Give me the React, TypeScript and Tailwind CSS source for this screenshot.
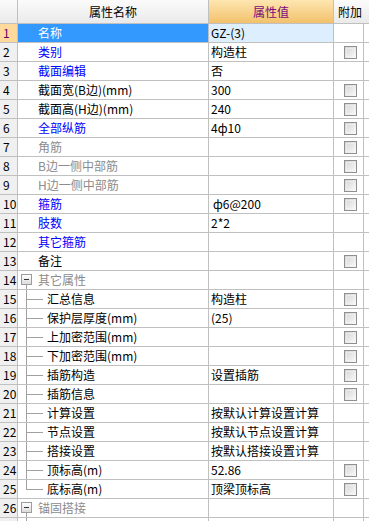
import React from 'react'

type Tone = 'blue' | 'gray' | 'black'

type Row = {
  name: string
  value?: string
  tone?: Tone
  check?: boolean
  group?: boolean
  child?: 'mid' | 'last'
  valuePad?: boolean
}

const rows: Row[] = [
  { name: '名称', value: 'GZ-(3)' },
  { name: '类别', value: '构造柱', tone: 'blue', check: true },
  { name: '截面编辑', value: '否', tone: 'blue' },
  { name: '截面宽(B边)(mm)', value: '300', check: true },
  { name: '截面高(H边)(mm)', value: '240', check: true },
  { name: '全部纵筋', value: '4ф10', tone: 'blue', check: true },
  { name: '角筋', tone: 'gray', check: true },
  { name: 'B边一侧中部筋', tone: 'gray', check: true },
  { name: 'H边一侧中部筋', tone: 'gray', check: true },
  { name: '箍筋', value: 'ф6@200', tone: 'blue', check: true, valuePad: true },
  { name: '肢数', value: '2*2', tone: 'blue' },
  { name: '其它箍筋', tone: 'blue' },
  { name: '备注', check: true },
  { name: '其它属性', tone: 'gray', group: true },
  { name: '汇总信息', value: '构造柱', check: true, child: 'mid' },
  { name: '保护层厚度(mm)', value: '(25)', check: true, child: 'mid' },
  { name: '上加密范围(mm)', check: true, child: 'mid' },
  { name: '下加密范围(mm)', check: true, child: 'mid' },
  { name: '插筋构造', value: '设置插筋', check: true, child: 'mid' },
  { name: '插筋信息', check: true, child: 'mid' },
  { name: '计算设置', value: '按默认计算设置计算', child: 'mid' },
  { name: '节点设置', value: '按默认节点设置计算', child: 'mid' },
  { name: '搭接设置', value: '按默认搭接设置计算', child: 'mid' },
  { name: '顶标高(m)', value: '52.86', check: true, child: 'mid' },
  { name: '底标高(m)', value: '顶梁顶标高', check: true, child: 'last' },
  { name: '锚固搭接', tone: 'gray', group: true },
]

const toneClass: Record<Tone, string> = {
  blue: 'text-[#0000ff]',
  gray: 'text-[#8c8c8c]',
  black: 'text-black',
}

function CheckBox() {
  return (
    <span className="block h-[13px] w-[13px] border border-[#8f8f8f] bg-gradient-to-br from-[#d4d4d4] to-[#fbfbfb] p-px">
      <span className="block h-full w-full border border-[#f4f4f4]/60" />
    </span>
  )
}

function ToggleBox() {
  return (
    <span className="absolute left-[3px] top-[3px] flex h-[11px] w-[11px] items-center justify-center border border-[#9c9c9c] bg-gradient-to-b from-white to-[#dcdcdc]">
      <span className="block h-px w-[5px] bg-[#333]" />
    </span>
  )
}

function PropRow({ row, index }: { row: Row; index: number }) {
  const selected = index === 1
  return (
    <div className="flex h-[19px] border-b border-[#c0c0c0]">
      <div
        className={`flex w-[18px] shrink-0 items-center border-r border-[#c0c0c0] pl-[3px] ${
          selected ? 'bg-[#fdd99b] text-[#6a006a]' : 'bg-[#f0f0f0] text-black'
        }`}
      >
        {index}
      </div>
      <div
        className={`relative flex w-[191px] shrink-0 items-center border-r border-[#c0c0c0] ${
          row.child ? 'pl-[29px]' : 'pl-[20px]'
        } ${selected ? 'bg-[#3399ff] text-white' : toneClass[row.tone ?? 'black']}`}
      >
        {row.group && (
          <>
            <ToggleBox />
            <span className="absolute left-[8px] top-[14px] bottom-0 w-px bg-[#a0a0a0]" />
          </>
        )}
        {row.child && (
          <>
            <span
              className={`absolute left-[8px] top-0 w-px bg-[#a0a0a0] ${
                row.child === 'last' ? 'h-[9px]' : 'bottom-0'
              }`}
            />
            <span className="absolute left-[8px] top-[9px] h-px w-[17px] bg-[#a0a0a0]" />
          </>
        )}
        {row.name}
      </div>
      <div
        className={`flex w-[125px] shrink-0 items-center border-r border-[#c0c0c0] ${
          row.valuePad ? 'pl-[4px]' : 'pl-[2px]'
        } ${selected ? 'bg-[#ddeeff]' : 'bg-white'}`}
      >
        {row.value}
      </div>
      <div className="flex w-[30px] shrink-0 items-center border-r border-[#c0c0c0] pl-[10px]">
        {row.check && <CheckBox />}
      </div>
    </div>
  )
}

export default function App() {
  return (
    <div
      className="h-[521px] w-[369px] overflow-hidden bg-white text-[12px] leading-none text-black"
      style={{ fontFamily: '"Noto Sans CJK SC", "Noto Sans", sans-serif' }}
    >
      <div className="flex h-[24px] border-b border-[#c0c0c0]">
        <div className="w-[18px] shrink-0 border-r border-[#c0c0c0] bg-gradient-to-b from-[#fbfbfb] to-[#eaeaea]" />
        <div className="flex w-[191px] shrink-0 items-center justify-center border-r border-[#c0c0c0] bg-gradient-to-b from-[#fbfbfb] to-[#eaeaea]">
          属性名称
        </div>
        <div className="flex w-[125px] shrink-0 items-center justify-center border-r border-[#c0c0c0] bg-gradient-to-b from-[#fde6b0] to-[#f2c16a] text-[#7a0a7a]">
          属性值
        </div>
        <div className="flex w-[35px] shrink-0 items-center pl-[4px] bg-gradient-to-b from-[#fbfbfb] to-[#eaeaea]">
          附加
        </div>
      </div>
      {rows.map((row, i) => (
        <PropRow key={i} row={row} index={i + 1} />
      ))}
      <div className="flex h-[19px]">
        <div className="w-[18px] shrink-0 border-r border-[#c0c0c0] bg-[#f0f0f0]" />
        <div className="relative w-[191px] shrink-0 border-r border-[#c0c0c0]">
          <span className="absolute left-[8px] top-0 bottom-0 w-px bg-[#a0a0a0]" />
        </div>
        <div className="w-[125px] shrink-0 border-r border-[#c0c0c0]" />
        <div className="w-[30px] shrink-0 border-r border-[#c0c0c0]" />
      </div>
    </div>
  )
}
